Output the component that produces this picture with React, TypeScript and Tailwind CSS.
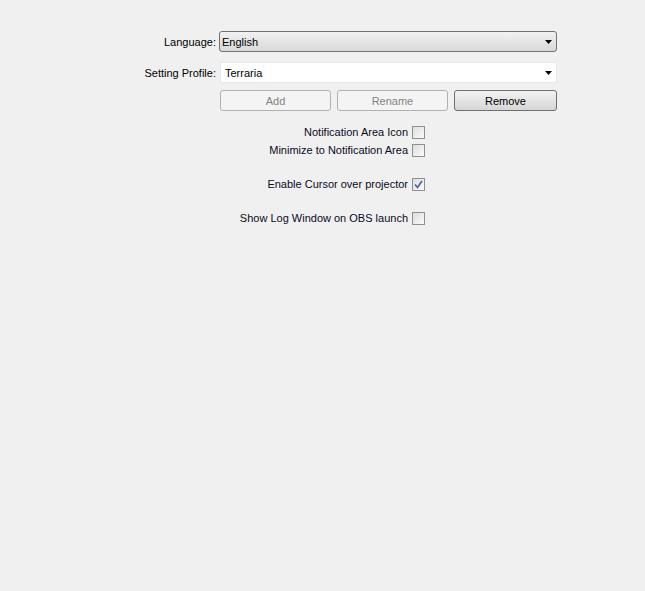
import { useState } from "react";

const font = "font-['Liberation_Sans',Arial,sans-serif]";

const Caret = () => (
  <svg width="7" height="4" viewBox="0 0 7 4" className="shrink-0">
    <path d="M0 0h7L3.5 4z" fill="#000" />
  </svg>
);

const Check = ({ checked, onToggle }: { checked: boolean; onToggle: () => void }) => (
  <button
    onClick={onToggle}
    className="flex h-[13px] w-[13px] items-center justify-center border border-[#8e8f8f] bg-gradient-to-br from-[#dcdcdc] to-[#fbfbfb] p-0"
  >
    {checked && (
      <svg width="9" height="9" viewBox="0 0 9 9">
        <path d="M1 4.5l2.5 3L8 1" stroke="#4a5f97" strokeWidth="1.6" fill="none" />
      </svg>
    )}
  </button>
);

const ToggleRow = ({ label, defaultOn = false }: { label: string; defaultOn?: boolean }) => {
  const [on, setOn] = useState(defaultOn);
  return (
    <div className="flex items-center justify-end gap-1 h-[18px]">
      <span>{label}</span>
      <Check checked={on} onToggle={() => setOn(!on)} />
    </div>
  );
};

export default function App() {
  return (
    <div className={`h-[591px] w-[645px] bg-[#f0f0f0] text-[11px] text-black ${font}`}>
      <div className="grid grid-cols-[217px_338px] items-center gap-x-[2px] pt-[31px]">
        <span className="text-right pr-[1px] pt-[1px]">Language:</span>
        <div className="flex h-[21px] items-center justify-between rounded-[3px] border border-[#707070] bg-gradient-to-b from-[#f2f2f2] to-[#d8d8d8] pl-[2px] pr-[4px]">
          <span className="pt-[1px]">English</span>
          <Caret />
        </div>

        <span className="mt-[10px] text-right pr-[1px] pt-[1px]">Setting Profile:</span>
        <div className="mt-[10px] ml-[1px] flex h-[21px] items-center justify-between border border-[#e3e9ef] bg-white pl-[4px] pr-[4px]">
          <span className="pt-[1px]">Terraria</span>
          <Caret />
        </div>

        <span />
        <div className="mt-[7px] ml-[1px] flex gap-[6px]">
          <button className="h-[21px] w-[112px] rounded-[3px] border border-[#adb2b5] bg-[#f4f4f4] pt-[1px] text-[#838383]">
            Add
          </button>
          <button className="h-[21px] w-[112px] rounded-[3px] border border-[#adb2b5] bg-[#f4f4f4] pt-[1px] text-[#838383]">
            Rename
          </button>
          <button className="h-[21px] w-[104px] rounded-[3px] border border-[#707070] bg-gradient-to-b from-[#f2f2f2] to-[#d6d6d6] pt-[1px]">
            Remove
          </button>
        </div>
      </div>

      <div className="mt-[12px] w-[425px] text-[#0a0a1e]">
        <ToggleRow label="Notification Area Icon" />
        <ToggleRow label="Minimize to Notification Area" />
        <div className="h-[16px]" />
        <ToggleRow label="Enable Cursor over projector" defaultOn />
        <div className="h-[16px]" />
        <ToggleRow label="Show Log Window on OBS launch" />
      </div>
    </div>
  );
}
